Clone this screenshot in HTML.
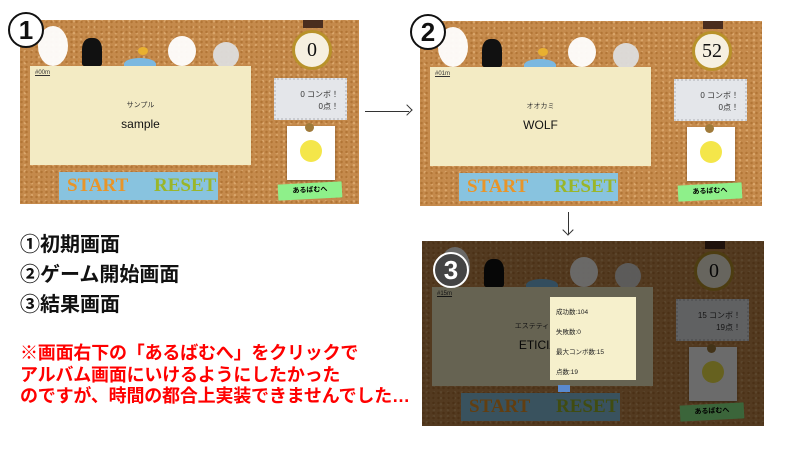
<!DOCTYPE html>
<html><head><meta charset="utf-8"><style>
*{margin:0;padding:0;box-sizing:border-box}
body{width:800px;height:453px;background:#fff;position:relative;overflow:hidden;font-family:"Liberation Sans","Noto Sans CJK JP",sans-serif}
.scr{position:absolute;width:340px;height:185px;background:#c58a4c;overflow:hidden;
background-image:radial-gradient(circle at 30% 40%,#b27536 0 1px,transparent 1.5px),radial-gradient(circle at 70% 20%,#d9a56a 0 1px,transparent 1.5px);background-size:5px 5px,7px 6px}
.scr>div{position:absolute}
.paper{left:10px;top:46px;width:221px;height:99px;background:#f3ebc4}
.paper .no{position:absolute;left:5px;top:4px;font-size:6px;text-decoration:underline;color:#333}
.paper .kana{position:absolute;width:100%;top:34px;text-align:center;font-size:7px;color:#333}
.paper .w{position:absolute;width:100%;top:51px;text-align:center;font-size:12px;color:#111}
.tape{left:39px;top:152px;width:159px;height:28px;background:#88c3df;font-family:"Liberation Serif",serif;font-weight:bold;font-size:19px;line-height:28px}
.tape span{position:absolute;top:0}
.clk{left:272px;top:10px;width:40px;height:40px;border-radius:50%;background:#f6f0e0;border:3px solid #b8922a;text-align:center;line-height:34px;font-family:"Liberation Serif",serif;font-size:20px;color:#111}
.strap{left:283px;top:0;width:20px;height:8px;background:#4a2d1e}
.stamp{left:254px;top:58px;width:73px;height:42px;background:#e4e6ea;border:2px dotted #c9cbd0;font-size:8px;color:#333;text-align:right;padding:9px 6px 0 0;line-height:12px}
.pol{left:267px;top:106px;width:48px;height:54px;background:#fff;box-shadow:0 1px 2px #0005}
.pol i{position:absolute;left:13px;top:14px;width:22px;height:22px;border-radius:50%;background:#f4e64a}
.pin{left:285px;top:103px;width:9px;height:9px;border-radius:50%;background:#a07a3a}
.gb{left:258px;top:163px;width:64px;height:16px;background:#8ef08a;font-size:7px;font-weight:bold;text-align:center;line-height:16px;transform:rotate(-3deg)}
.ch{background:#fff;border-radius:50%;opacity:.95}
.cat{background:#111;border-radius:40% 40% 10% 10%}
.num{position:absolute;width:36px;height:36px;border-radius:50%;border:2px solid #111;background:#fff;font-size:26px;font-weight:bold;text-align:center;line-height:32px;color:#111;font-family:"Liberation Sans",sans-serif}
.lbl{position:absolute;left:20px;font-size:20px;font-weight:bold;color:#111;font-family:"Liberation Sans","Noto Sans CJK JP",sans-serif}
.red{position:absolute;left:20px;font-size:18px;font-weight:bold;color:#f00;line-height:21.5px;letter-spacing:-0.2px;white-space:nowrap}
</style></head><body>

<div class="scr" style="left:20px;top:20px;width:339px;height:184px">
 <div class="ch" style="left:18px;top:6px;width:30px;height:40px"></div>
 <div class="cat" style="left:62px;top:18px;width:20px;height:28px"></div>
 <div style="left:104px;top:38px;width:32px;height:12px;background:#7bb8e0;border-radius:50% 50% 0 0"></div>
 <div style="left:118px;top:27px;width:10px;height:8px;border-radius:50%;background:#e8b030"></div>
 <div class="ch" style="left:148px;top:16px;width:28px;height:30px"></div>
 <div class="ch" style="left:193px;top:22px;width:26px;height:26px;background:#ddd"></div>
 <div class="paper"><span class="no">#00m</span><span class="kana">サンプル</span><span class="w">sample</span></div>
 <div class="tape"><span style="left:8px;color:#e8952a">START</span><span style="left:95px;color:#9ab62a">RESET</span></div>
 <div class="strap"></div><div class="clk">0</div>
 <div class="stamp">0 コンボ！<br>0点！</div>
 <div class="pol"><i></i></div><div class="pin"></div>
 <div class="gb">あるばむへ</div>
</div>
<div class="num" style="left:8px;top:12px">1</div>

<div class="scr" style="left:420px;top:21px;width:342px;height:185px">
 <div class="ch" style="left:18px;top:6px;width:30px;height:40px"></div>
 <div class="cat" style="left:62px;top:18px;width:20px;height:28px"></div>
 <div style="left:104px;top:38px;width:32px;height:12px;background:#7bb8e0;border-radius:50% 50% 0 0"></div>
 <div style="left:118px;top:27px;width:10px;height:8px;border-radius:50%;background:#e8b030"></div>
 <div class="ch" style="left:148px;top:16px;width:28px;height:30px"></div>
 <div class="ch" style="left:193px;top:22px;width:26px;height:26px;background:#ddd"></div>
 <div class="paper"><span class="no">#01m</span><span class="kana">オオカミ</span><span class="w">WOLF</span></div>
 <div class="tape"><span style="left:8px;color:#e8952a">START</span><span style="left:95px;color:#9ab62a">RESET</span></div>
 <div class="strap"></div><div class="clk">52</div>
 <div class="stamp">0 コンボ！<br>0点！</div>
 <div class="pol"><i></i></div><div class="pin"></div>
 <div class="gb">あるばむへ</div>
</div>
<div class="num" style="left:410px;top:14px">2</div>

<div class="scr" style="left:422px;top:241px;width:342px;height:185px">
 <div class="ch" style="left:18px;top:6px;width:30px;height:40px"></div>
 <div class="cat" style="left:62px;top:18px;width:20px;height:28px"></div>
 <div style="left:104px;top:38px;width:32px;height:12px;background:#7bb8e0;border-radius:50% 50% 0 0"></div>
 <div class="ch" style="left:148px;top:16px;width:28px;height:30px"></div>
 <div class="ch" style="left:193px;top:22px;width:26px;height:26px;background:#ddd"></div>
 <div class="paper"><span class="no">#15m</span><span class="kana">エステティシャン</span><span class="w">ETICIAN</span></div>
 <div class="tape"><span style="left:8px;color:#e8952a">START</span><span style="left:95px;color:#9ab62a">RESET</span></div>
 <div class="strap"></div><div class="clk">0</div>
 <div class="stamp">15 コンボ！<br>19点！</div>
 <div class="pol"><i></i></div><div class="pin"></div>
 <div class="gb">あるばむへ</div>
 <div style="left:0;top:0;width:342px;height:185px;background:rgba(0,0,0,.58)"></div>
 <div style="left:128px;top:56px;width:86px;height:83px;background:#f6f0cc;font-size:6.5px;color:#222;padding:6px 0 0 6px;line-height:20px">成功数:104<br>失敗数:0<br>最大コンボ数:15<br>点数:19</div>
 <div style="left:136px;top:144px;width:12px;height:7px;background:#5a8ad0"></div>
</div>
<div class="num" style="left:433px;top:252px;background:#444;color:#fff;border-color:#fff">3</div>

<div style="position:absolute;left:365px;top:111px;width:44px;height:1px;background:#333"></div>
<div style="position:absolute;left:403px;top:106px;width:8px;height:8px;border-top:1px solid #333;border-right:1px solid #333;transform:rotate(45deg)"></div>
<div style="position:absolute;left:568px;top:212px;width:1px;height:22px;background:#333"></div>
<div style="position:absolute;left:564px;top:226px;width:8px;height:8px;border-bottom:1px solid #333;border-right:1px solid #333;transform:rotate(45deg)"></div>

<div class="lbl" style="top:228px">①初期画面</div>
<div class="lbl" style="top:258px">②ゲーム開始画面</div>
<div class="lbl" style="top:288px">③結果画面</div>
<div class="red" style="top:343px">※画面右下の「あるばむへ」をクリックで<br>アルバム画面にいけるようにしたかった<br>のですが、時間の都合上実装できませんでした…</div>
</body></html>
